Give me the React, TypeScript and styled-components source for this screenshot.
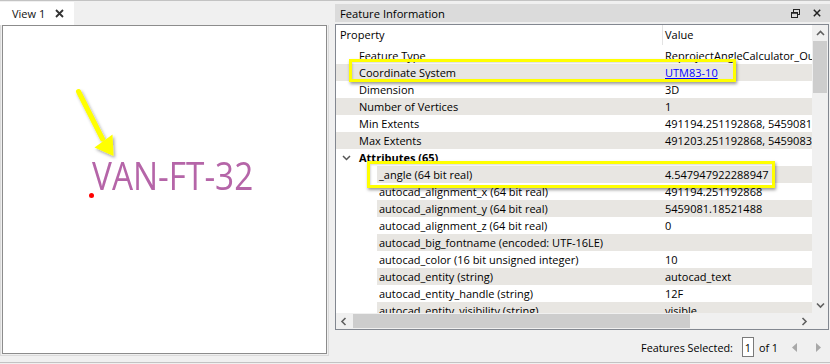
import React from "react";
import styled, { createGlobalStyle } from "styled-components";

const Global = createGlobalStyle`
  html, body { margin: 0; padding: 0; background: #f0f0f0; }
  #root { width: 830px; height: 364px; }
`;

const UI_FONT = `"Open Sans", "Noto Sans", sans-serif`;

const Page = styled.div`
  position: relative;
  width: 830px;
  height: 364px;
  box-sizing: border-box;
  background: #f0f0f0;
  border-top: 1px solid #c3c3c3;
  font-family: ${UI_FONT};
  font-size: 11px;
  color: #000;
  overflow: hidden;
`;

const Main = styled.div`
  display: flex;
  height: 361px;
  border-bottom: 1px solid #c3c3c3;
`;

/* ---------- left: map view ---------- */
const LeftPane = styled.div`
  width: 329px;
  display: flex;
  flex-direction: column;
`;

const TabBar = styled.div`
  height: 24px;
  display: flex;
  align-items: flex-end;
`;

const Tab = styled.div`
  width: 74px;
  height: 23px;
  box-sizing: border-box;
  background: #fff;
  display: flex;
  align-items: center;
  padding-left: 12px;
  padding-right: 10px;
  color: #111;
`;

const TabClose = styled.svg`
  margin-left: auto;
  width: 9px;
  height: 9px;
`;

const ViewFrame = styled.div`
  height: 331px;
  box-sizing: border-box;
  border: 1px solid #dadada;
  border-top: none;
  padding: 0 1px 1px 1px;
`;

const Canvas = styled.div`
  position: relative;
  height: 100%;
  box-sizing: border-box;
  border: 1px solid #8c8c8c;
  background: #fff;
`;

const MapLabel = styled.div`
  position: absolute;
  left: 89px;
  top: 129px;
  font-family: "Open Sans", "Noto Sans", sans-serif;
  font-size: 39px;
  line-height: 39px;
  color: #b565a8;
  white-space: nowrap;
  transform: scaleX(0.855);
  transform-origin: left top;
`;

const MapPoint = styled.div`
  position: absolute;
  left: 86px;
  top: 167px;
  width: 5px;
  height: 5px;
  border-radius: 50%;
  background: #ff0000;
`;

const ArrowSvg = styled.svg`
  position: absolute;
  left: 67px;
  top: 59px;
  width: 55px;
  height: 105px;
  overflow: visible;
`;

/* ---------- right: feature information ---------- */
const RightPane = styled.div`
  width: 495px;
  margin-left: 6px;
  display: flex;
  flex-direction: column;
`;

const DockTitle = styled.div`
  margin-top: 3px;
  height: 18px;
  box-sizing: border-box;
  background: #dbdbdb;
  display: flex;
  align-items: center;
  padding: 0 9px 0 5px;
  font-size: 11.2px;
`;

const DockButtons = styled.div`
  margin-left: auto;
  display: flex;
  align-items: center;
  gap: 13px;
`;

const TableFrame = styled.div`
  margin-top: 2px;
  width: 494px;
  height: 306px;
  box-sizing: border-box;
  border: 1px solid #828790;
  background: #fff;
  display: grid;
  grid-template-columns: 476px 16px;
  grid-template-rows: 288px 16px;
`;

const TableArea = styled.div`
  display: flex;
  flex-direction: column;
  overflow: hidden;
`;

const HeaderRow = styled.div`
  height: 26px;
  flex-shrink: 0;
  display: flex;
  align-items: flex-start;
`;

const HeaderCell = styled.div<{ $w?: number }>`
  ${(p) => (p.$w ? `width: ${p.$w}px; border-right: 1px solid #e3e3e3;` : "flex: 1;")}
  box-sizing: border-box;
  height: 20px;
  line-height: 20px;
  padding-left: ${(p) => (p.$w ? 4 : 2)}px;
`;

const Body = styled.div`
  flex: 1;
  overflow: hidden;
`;

const Rows = styled.div`
  margin-top: -4px;
`;

const Row = styled.div<{ $indent: number }>`
  display: flex;
  height: 17px;
  padding-left: ${(p) => p.$indent}px;
`;

const RowBody = styled.div<{ $alt: boolean; $indent: number }>`
  flex: 1;
  display: grid;
  grid-template-columns: ${(p) => 327 - p.$indent}px 1fr;
  background: ${(p) => (p.$alt ? "#e8e6e2" : "#fff")};
  line-height: 17px;
`;

const PropCell = styled.div<{ $pad: number; $bold?: boolean }>`
  display: flex;
  align-items: center;
  padding-left: ${(p) => p.$pad}px;
  white-space: nowrap;
  overflow: hidden;
  font-weight: ${(p) => (p.$bold ? 700 : 400)};
`;

const Branch = styled.div`
  width: 23px;
  flex-shrink: 0;
  display: flex;
  align-items: center;
  padding-left: 6px;
  box-sizing: border-box;
`;

const ValueCell = styled.div`
  padding-left: 2px;
  white-space: nowrap;
  overflow: hidden;
`;

const Link = styled.span`
  color: #0000ff;
  text-decoration: underline;
`;

const VScroll = styled.div`
  background: #f0f0f0;
  display: flex;
  flex-direction: column;
`;

const HScroll = styled.div`
  background: #f0f0f0;
  display: flex;
`;

const Corner = styled.div`
  background: #f0f0f0;
`;

const ScrollButton = styled.div`
  width: 16px;
  height: 16px;
  flex-shrink: 0;
  display: flex;
  align-items: center;
  justify-content: center;
`;

const VThumb = styled.div`
  height: 52px;
  margin: 0 1px;
  background: #cdcdcd;
`;

const HThumb = styled.div`
  width: 337px;
  margin: 1px 0 1px 1px;
  background: #cdcdcd;
`;

const Spacer = styled.div`
  flex: 1;
`;

const StatusBar = styled.div`
  flex: 1;
  display: flex;
  align-items: center;
  justify-content: flex-end;
  padding: 2px 9px 0 0;
  font-size: 10.8px;
`;

const StatusText = styled.span<{ $gap?: number }>`
  margin-left: ${(p) => p.$gap ?? 0}px;
  white-space: nowrap;
`;

const PageBox = styled.div`
  margin-left: 9px;
  width: 12px;
  height: 20px;
  box-sizing: border-box;
  border: 1px solid #7a7a7a;
  background: #fff;
  display: flex;
  align-items: center;
  justify-content: center;
`;

const NavArrow = styled.svg<{ $gap: number }>`
  margin-left: ${(p) => p.$gap}px;
  width: 5px;
  height: 9px;
`;

const Highlight = styled.div<{ $x: number; $y: number; $w: number; $h: number }>`
  position: absolute;
  left: ${(p) => p.$x}px;
  top: ${(p) => p.$y}px;
  width: ${(p) => p.$w}px;
  height: ${(p) => p.$h}px;
  box-sizing: border-box;
  border: 3px solid #ffff00;
  box-shadow: 1px 2px 3px rgba(0, 0, 0, 0.4), inset 1px 1px 2px rgba(0, 0, 0, 0.15);
  pointer-events: none;
`;

type RowData = {
  prop: string;
  value?: React.ReactNode;
  child?: boolean;
  group?: boolean;
};

const rows: RowData[] = [
  { prop: "Feature Type", value: "ReprojectAngleCalculator_Output" },
  { prop: "Coordinate System", value: <Link>UTM83-10</Link> },
  { prop: "Dimension", value: "3D" },
  { prop: "Number of Vertices", value: "1" },
  { prop: "Min Extents", value: "491194.251192868, 5459081.18521488" },
  { prop: "Max Extents", value: "491203.251192868, 5459083.18521488" },
  { prop: "Attributes (65)", group: true },
  { prop: "_angle (64 bit real)", value: "4.547947922288947", child: true },
  { prop: "autocad_alignment_x (64 bit real)", value: "491194.251192868", child: true },
  { prop: "autocad_alignment_y (64 bit real)", value: "5459081.18521488", child: true },
  { prop: "autocad_alignment_z (64 bit real)", value: "0", child: true },
  { prop: "autocad_big_fontname (encoded: UTF-16LE)", value: "", child: true },
  { prop: "autocad_color (16 bit unsigned integer)", value: "10", child: true },
  { prop: "autocad_entity (string)", value: "autocad_text", child: true },
  { prop: "autocad_entity_handle (string)", value: "12F", child: true },
  { prop: "autocad_entity_visibility (string)", value: "visible", child: true },
];

const Chevron = ({ dir, color = "#606060" }: { dir: "up" | "down" | "left" | "right"; color?: string }) => {
  const paths: Record<string, string> = {
    up: "M1 5 L4.5 1.5 L8 5",
    down: "M1 1.5 L4.5 5 L8 1.5",
    left: "M5.5 1 L2 4.5 L5.5 8",
    right: "M2.5 1 L6 4.5 L2.5 8",
  };
  const vertical = dir === "up" || dir === "down";
  return (
    <svg width={vertical ? 9 : 8} height={vertical ? 7 : 9} viewBox={vertical ? "0 0 9 7" : "0 0 8 9"}>
      <path d={paths[dir]} fill="none" stroke={color} strokeWidth="1.6" />
    </svg>
  );
};

export default function App() {
  return (
    <>
      <Global />
      <Page>
        <Main>
          <LeftPane>
            <TabBar>
              <Tab>
                View 1
                <TabClose viewBox="0 0 9 9">
                  <path d="M1 1 L8 8 M8 1 L1 8" stroke="#333" strokeWidth="1.8" />
                </TabClose>
              </Tab>
            </TabBar>
            <ViewFrame>
              <Canvas>
                <ArrowSvg viewBox="70 85 55 105">
                  <defs>
                    <filter id="arrowShadow" x="-30%" y="-30%" width="160%" height="160%">
                      <feDropShadow dx="1.5" dy="2" stdDeviation="1.5" floodColor="#000" floodOpacity="0.35" />
                    </filter>
                  </defs>
                  <g filter="url(#arrowShadow)">
                    <path d="M78.5 91.5 L102.5 139" stroke="#ffff00" strokeWidth="5" strokeLinecap="round" />
                    <path d="M94.5 147.5 L112.5 134.5 L113.5 156 Z" fill="#ffff00" />
                  </g>
                </ArrowSvg>
                <MapLabel>VAN-FT-32</MapLabel>
                <MapPoint />
              </Canvas>
            </ViewFrame>
          </LeftPane>

          <RightPane>
            <DockTitle>
              Feature Information
              <DockButtons>
                <svg width="9" height="9" viewBox="0 0 9 9">
                  <rect x="2.5" y="0.5" width="6" height="5" fill="none" stroke="#222" />
                  <rect x="0.5" y="3.5" width="6" height="5" fill="#dbdbdb" stroke="#222" />
                  <path d="M0.5 4 H6.5" stroke="#222" strokeWidth="1.5" />
                </svg>
                <svg width="8" height="8" viewBox="0 0 8 8">
                  <path d="M0.8 0.8 L7.2 7.2 M7.2 0.8 L0.8 7.2" stroke="#222" strokeWidth="1.5" />
                </svg>
              </DockButtons>
            </DockTitle>

            <TableFrame>
              <TableArea>
                <HeaderRow>
                  <HeaderCell $w={327}>Property</HeaderCell>
                  <HeaderCell>Value</HeaderCell>
                </HeaderRow>
                <Body>
                  <Rows>
                    {rows.map((r, i) => {
                      const indent = r.child ? 41 : 0;
                      return (
                        <Row key={r.prop} $indent={indent}>
                          <RowBody $alt={i % 2 === 1} $indent={indent}>
                            <PropCell $pad={r.child ? 2 : 0} $bold={r.group}>
                              {!r.child && (
                                <Branch>
                                  {r.group && (
                                    <svg width="9" height="6" viewBox="0 0 9 6">
                                      <path d="M1 1 L4.5 4.5 L8 1" fill="none" stroke="#555" strokeWidth="1.5" />
                                    </svg>
                                  )}
                                </Branch>
                              )}
                              {r.prop}
                            </PropCell>
                            <ValueCell>{r.value}</ValueCell>
                          </RowBody>
                        </Row>
                      );
                    })}
                  </Rows>
                </Body>
              </TableArea>

              <VScroll>
                <ScrollButton>
                  <Chevron dir="up" />
                </ScrollButton>
                <VThumb />
                <Spacer />
                <ScrollButton>
                  <Chevron dir="down" />
                </ScrollButton>
              </VScroll>

              <HScroll>
                <ScrollButton>
                  <Chevron dir="left" />
                </ScrollButton>
                <HThumb />
                <Spacer />
                <ScrollButton>
                  <Chevron dir="right" />
                </ScrollButton>
              </HScroll>
              <Corner />
            </TableFrame>

            <StatusBar>
              <StatusText>Features Selected:</StatusText>
              <PageBox>1</PageBox>
              <StatusText $gap={5}>of 1</StatusText>
              <NavArrow $gap={14} viewBox="0 0 5 9">
                <path d="M5 0 L0 4.5 L5 9 Z" fill="#a8a8a8" />
              </NavArrow>
              <NavArrow $gap={19} viewBox="0 0 5 9">
                <path d="M0 0 L5 4.5 L0 9 Z" fill="#a8a8a8" />
              </NavArrow>
            </StatusBar>
          </RightPane>
        </Main>

        <Highlight $x={349} $y={58} $w={387} $h={23} />
        <Highlight $x={367} $y={160} $w={408} $h={27} />
      </Page>
    </>
  );
}
